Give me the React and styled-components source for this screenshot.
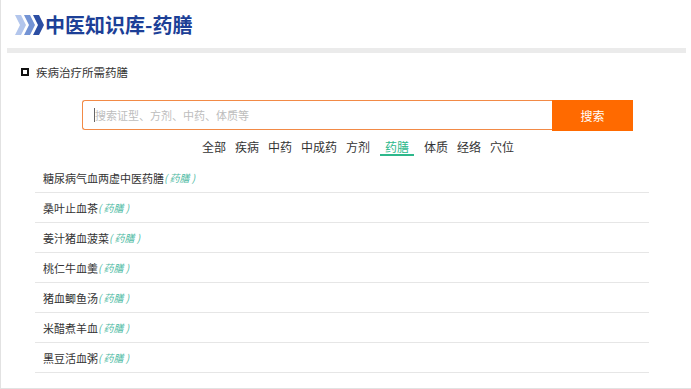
import React from "react";
import styled, { createGlobalStyle } from "styled-components";

const Global = createGlobalStyle`
  html, body { margin: 0; padding: 0; background: #fff; }
  body { font-family: "Noto Sans CJK SC", "Noto Sans", sans-serif; color: #333; }
  * { box-sizing: border-box; }
`;

const Page = styled.div`
  width: 691px;
  height: 389px;
  border-left: 1px solid #e2e2e2;
  border-bottom: 1px solid #e2e2e2;
  overflow: hidden;
`;

const Header = styled.header`
  display: flex;
  align-items: center;
  gap: 1px;
  padding: 15px 0 0 14px;
  height: 35px;
`;

const Title = styled.h1`
  margin: 0;
  font-size: 20px;
  line-height: 20px;
  font-weight: 700;
  color: #1c3f97;
  letter-spacing: 0;
`;

const Bar = styled.div`
  height: 5px;
  margin: 13px 5px 0 6px;
  background: #ebebeb;
`;

const SectionHead = styled.div`
  display: flex;
  align-items: center;
  gap: 7px;
  margin: 11px 0 0 20px;
  height: 16px;
  font-size: 11.5px;
  color: #333;
`;

const Square = styled.span`
  width: 8px;
  height: 8px;
  border: 2px solid #111;
`;

const SearchForm = styled.form`
  display: flex;
  margin: 20px 0 0 81px;
  width: 551px;
  height: 31px;
`;

const SearchInput = styled.div`
  flex: 1;
  height: 30px;
  border: 1px solid #f28a46;
  border-right: none;
  border-radius: 3px 0 0 3px;
  display: flex;
  align-items: center;
  padding-left: 11px;
  font-size: 11px;
  color: #bdbdbd;
`;

const Caret = styled.span`
  width: 1px;
  height: 14px;
  background: #666;
`;

const SearchButton = styled.button`
  width: 81px;
  height: 31px;
  border: none;
  background: #ff6a00;
  color: #fff;
  font-family: inherit;
  font-size: 12px;
  padding: 0;
`;

const Tabs = styled.nav`
  display: flex;
  justify-content: center;
  gap: 9px;
  margin: 9px 0 0 0;
  padding-left: 24px;
`;

const Tab = styled.span`
  font-size: 12px;
  line-height: 14px;
  padding: 0 ${(p) => (p.$active ? "5px" : "0")};
  margin: 0 ${(p) => (p.$active ? "1px" : "0")};
  color: ${(p) => (p.$active ? "#2db88b" : "#333")};
  border-bottom: 2px solid ${(p) => (p.$active ? "#2db88b" : "transparent")};
`;

const List = styled.ul`
  list-style: none;
  margin: 7px 42px 0 34px;
  padding: 0;
`;

const Row = styled.li`
  display: flex;
  align-items: center;
  height: 30px;
  padding: 1px 8px 0;
  font-size: 11px;
  line-height: 16px;
  color: #333;
  border-bottom: 1px solid #e6e6e6;
`;

const Tag = styled.span`
  font-style: italic;
  font-size: 10px;
  line-height: 16px;
  color: #4fbba4;
  white-space: pre;
`;

const Chevrons = () => (
  <svg width="29" height="20" viewBox="0 0 29 20">
    <polygon points="0,0 6,0 11,10 6,20 0,20 5,10" fill="#b3c6ec" />
    <polygon points="9,0 15,0 20,10 15,20 9,20 14,10" fill="#7393d4" />
    <polygon points="18,0 24,0 29,10 24,20 18,20 23,10" fill="#2c4ea3" />
  </svg>
);

const tabs = ["全部", "疾病", "中药", "中成药", "方剂", "药膳", "体质", "经络", "穴位"];
const items = [
  "糖尿病气血两虚中医药膳",
  "桑叶止血茶",
  "姜汁猪血菠菜",
  "桃仁牛血羹",
  "猪血鲫鱼汤",
  "米醋煮羊血",
  "黑豆活血粥",
];

export default function App() {
  return (
    <>
      <Global />
      <Page>
        <Header>
          <Chevrons />
          <Title>中医知识库-药膳</Title>
        </Header>
        <Bar />
        <SectionHead>
          <Square />
          疾病治疗所需药膳
        </SectionHead>
        <SearchForm onSubmit={(e) => e.preventDefault()}>
          <SearchInput>
            <Caret />
            搜索证型、方剂、中药、体质等
          </SearchInput>
          <SearchButton type="submit">搜索</SearchButton>
        </SearchForm>
        <Tabs>
          {tabs.map((t) => (
            <Tab key={t} $active={t === "药膳"}>
              {t}
            </Tab>
          ))}
        </Tabs>
        <List>
          {items.map((it) => (
            <Row key={it}>
              {it}
              <Tag>( 药膳 )</Tag>
            </Row>
          ))}
        </List>
      </Page>
    </>
  );
}
